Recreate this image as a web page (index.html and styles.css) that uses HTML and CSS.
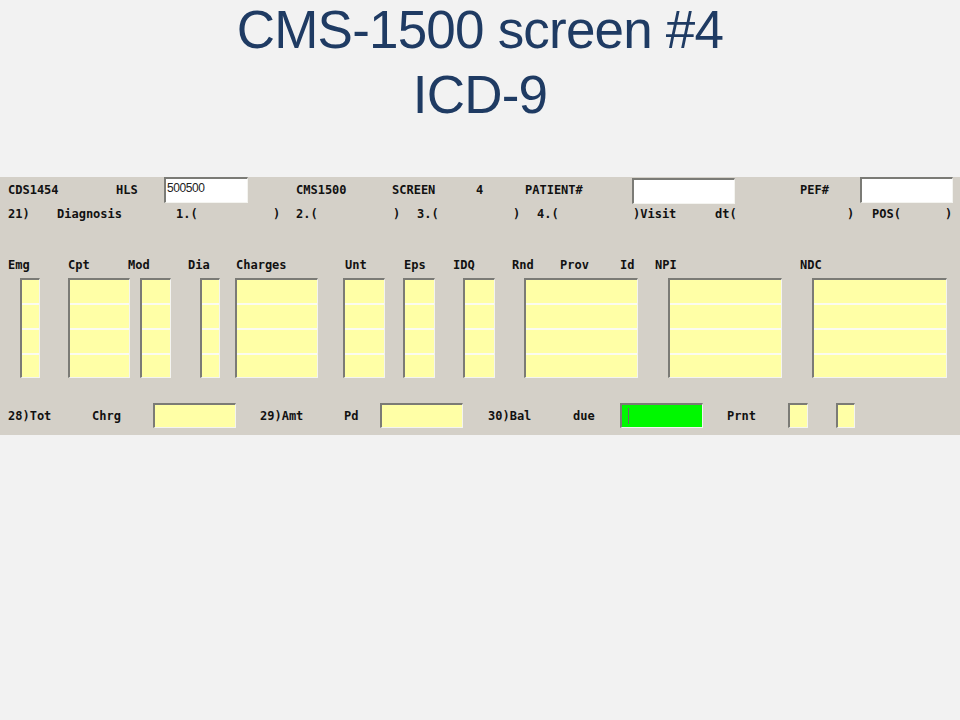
FILE: index.html
```html
<!DOCTYPE html>
<html lang="en">
<head>
<meta charset="utf-8">
<title>CMS-1500 screen #4 ICD-9</title>
<link rel="stylesheet" href="styles.css">
</head>
<body>
<h1 class="title">CMS-1500 screen #4<br>ICD-9</h1>
<section class="panel">
  <div class="row row-top">
    <span>CDS1454</span>
    <span>HLS</span>
    <span class="field field-white f-hls">500500</span>
    <span>CMS1500</span>
    <span>SCREEN</span>
    <span>4</span>
    <span>PATIENT#</span>
    <span class="field field-white f-patient"></span>
    <span>PEF#</span>
    <span class="field field-white f-pef"></span>
  </div>
  <div class="row row-diag">
    <span>21)</span>
    <span>Diagnosis</span>
    <span>1.(</span>
    <span>)</span>
    <span>2.(</span>
    <span>)</span>
    <span>3.(</span>
    <span>)</span>
    <span>4.(</span>
    <span>)Visit</span>
    <span>dt(</span>
    <span>)</span>
    <span>POS(</span>
    <span>)</span>
  </div>
  <div class="row row-head">
    <span>Emg</span>
    <span>Cpt</span>
    <span>Mod</span>
    <span>Dia</span>
    <span>Charges</span>
    <span>Unt</span>
    <span>Eps</span>
    <span>IDQ</span>
    <span>Rnd</span>
    <span>Prov</span>
    <span>Id</span>
    <span>NPI</span>
    <span>NDC</span>
  </div>
  <div class="lines">
    <div class="col c-emg"><div class="cell"></div><div class="cell"></div><div class="cell"></div><div class="cell"></div></div>
    <div class="col c-cpt"><div class="cell"></div><div class="cell"></div><div class="cell"></div><div class="cell"></div></div>
    <div class="col c-mod"><div class="cell"></div><div class="cell"></div><div class="cell"></div><div class="cell"></div></div>
    <div class="col c-dia"><div class="cell"></div><div class="cell"></div><div class="cell"></div><div class="cell"></div></div>
    <div class="col c-chg"><div class="cell"></div><div class="cell"></div><div class="cell"></div><div class="cell"></div></div>
    <div class="col c-unt"><div class="cell"></div><div class="cell"></div><div class="cell"></div><div class="cell"></div></div>
    <div class="col c-eps"><div class="cell"></div><div class="cell"></div><div class="cell"></div><div class="cell"></div></div>
    <div class="col c-idq"><div class="cell"></div><div class="cell"></div><div class="cell"></div><div class="cell"></div></div>
    <div class="col c-prov"><div class="cell"></div><div class="cell"></div><div class="cell"></div><div class="cell"></div></div>
    <div class="col c-npi"><div class="cell"></div><div class="cell"></div><div class="cell"></div><div class="cell"></div></div>
    <div class="col c-ndc"><div class="cell"></div><div class="cell"></div><div class="cell"></div><div class="cell"></div></div>
  </div>
  <div class="row row-tot">
    <span>28)Tot</span>
    <span>Chrg</span>
    <span class="field field-yellow f-money"></span>
    <span>29)Amt</span>
    <span>Pd</span>
    <span class="field field-yellow f-money"></span>
    <span>30)Bal</span>
    <span>due</span>
    <span class="field field-green f-money"><span class="cursor"></span></span>
    <span>Prnt</span>
    <span class="field field-yellow f-prnt"></span>
    <span class="field field-yellow f-prnt2"></span>
  </div>
</section>
</body>
</html>
```

FILE: styles.css
```css
html {
  background: #f2f2f2;
}

body {
  margin: 0;
  background: #f2f2f2;
}

.title {
  margin: -3px 0 0;
  height: 129px;
  font-family: "Liberation Sans", Arial, sans-serif;
  font-weight: 400;
  font-size: 53px;
  letter-spacing: -0.8px;
  line-height: 65px;
  color: #1f3b63;
  text-align: center;
}

.panel {
  margin-top: 51px;
  background: #d4d0c8;
  padding: 0 0 7px 8px;
  font-family: "DejaVu Sans Mono", "Liberation Mono", monospace;
  font-weight: bold;
  font-size: 12px;
  color: #111;
}

.row {
  display: grid;
  align-items: center;
  white-space: pre;
}

.row-top {
  height: 27px;
  grid-template-columns: 108px 48px 132px 96px 84px 49px 107px 168px 60px 93px;
}

.row-top > span:not(.field) {
  padding-bottom: 2px;
}

.row-diag {
  height: 20px;
  grid-template-columns: 49px 119px 97px 23px 97px 24px 96px 24px 96px 82px 132px 25px 73px auto;
}

.row-head {
  height: 20px;
  margin-top: 31px;
  grid-template-columns: 60px 60px 60px 48px 109px 59px 49px 59px 48px 60px 35px 145px auto;
}

.row-tot {
  height: 25px;
  margin-top: 25px;
  grid-template-columns: 84px 61px 107px 84px 36px 108px 85px 47px 107px 61px 48px 19px;
}

.field {
  box-sizing: border-box;
  display: block;
  justify-self: start;
  align-self: start;
  border-top: 2px solid #7b7b76;
  border-left: 2px solid #7b7b76;
  border-right: 1px solid #f4f4f0;
  border-bottom: 1px solid #f4f4f0;
  position: relative;
}

.field-white {
  background: #ffffff;
  height: 26px;
  font-family: "Liberation Sans", "DejaVu Sans", sans-serif;
  font-weight: normal;
  font-size: 12px;
  letter-spacing: -0.4px;
  line-height: 18px;
  padding-left: 1px;
  color: #222;
}

.f-hls {
  width: 84px;
}

.f-patient {
  width: 103px;
  margin-top: 1px;
}

.f-pef {
  width: 93px;
}

.field-yellow {
  background: #ffffa6;
  height: 25px;
}

.field-green {
  background: #00f800;
  height: 25px;
}

.f-money {
  width: 83px;
}

.f-prnt {
  width: 20px;
}

.f-prnt2 {
  width: 19px;
}

.cursor {
  position: absolute;
  left: 6px;
  top: 3px;
  width: 1px;
  height: 16px;
  background: #6a6a6a;
}

.lines {
  display: flex;
  height: 100px;
  margin-top: 3px;
  padding-left: 12px;
}

.col {
  box-sizing: border-box;
  display: flex;
  flex-direction: column;
  height: 100px;
  background: #ffffa6;
  border-top: 2px solid #7b7b76;
  border-left: 2px solid #7b7b76;
  border-right: 1px solid #f4f4f0;
  border-bottom: 1px solid #f4f4f0;
}

.cell {
  flex: 0 0 23px;
  border-bottom: 2px solid #fbfbf0;
}

.cell:last-child {
  flex: 1 1 0;
  border-bottom: 0;
}

.c-emg { width: 20px; }
.c-cpt { width: 62px; margin-left: 28px; }
.c-mod { width: 31px; margin-left: 10px; }
.c-dia { width: 20px; margin-left: 29px; }
.c-chg { width: 83px; margin-left: 15px; }
.c-unt { width: 42px; margin-left: 25px; }
.c-eps { width: 32px; margin-left: 18px; }
.c-idq { width: 32px; margin-left: 28px; }
.c-prov { width: 114px; margin-left: 29px; }
.c-npi { width: 114px; margin-left: 30px; }
.c-ndc { width: 135px; margin-left: 30px; }
```
